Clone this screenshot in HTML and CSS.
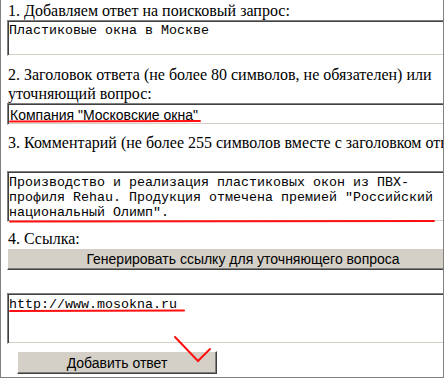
FILE: index.html
```html
<!DOCTYPE html>
<html lang="ru">
<head>
    <meta charset="UTF-8">
    <title>Добавить ответ</title>
    <link rel="stylesheet" href="styles.css">
</head>
<body>
    <div class="frame">
        <form class="answer_form">
            <div class="label label_first">1. Добавляем ответ на поисковый запрос:</div>
            <textarea class="field field_query">Пластиковые окна в Москве</textarea>

            <div class="label">2. Заголовок ответа (не более 80 символов, не обязателен) или<br>уточняющий вопрос:</div>
            <input class="field field_title" type="text" value="Компания &quot;Московские окна&quot;">

            <div class="label label_spaced">3. Комментарий (не более 255 символов вместе с заголовком ответа):</div>
            <textarea class="field field_comment">Производство и реализация пластиковых окон из ПВХ-профиля Rehau. Продукция отмечена премией "Российский национальный Олимп".</textarea>

            <div class="label">4. Ссылка:</div>
            <button type="button" class="win_button gen_button">Генерировать ссылку для уточняющего вопроса</button>
            <textarea class="field field_link">http://www.mosokna.ru</textarea>

            <button type="button" class="win_button submit_button">Добавить ответ</button>
        </form>

        <!-- red pen marks drawn over the form -->
        <svg class="marks" width="444" height="378" viewBox="0 0 444 378">
            <path d="M10 121.5 L200 121" />
            <path d="M10 221.5 L434 221" />
            <path d="M10 311 L184 310.5" />
            <path d="M175 337 L198 361 L210 349" />
        </svg>
    </div>
</body>
</html>
```

FILE: styles.css
```css
body {
    margin: 0;
    background: #ffffff;
}

.frame {
    position: relative;
    width: 444px;
    height: 378px;
    box-sizing: border-box;
    border: 1px solid #808080;
    border-top: 0;
    overflow: hidden;
    background: #ffffff;
}

.answer_form {
    padding: 1px 0 0 6px;
}

.label {
    font-family: "Liberation Serif", "Times New Roman", serif;
    font-size: 16px;
    line-height: 19px;
    color: #000000;
    white-space: nowrap;
    padding-left: 1px;
}

.label_spaced {
    margin-bottom: 19px;
}

.field {
    display: block;
    box-sizing: border-box;
    width: 450px;
    margin: 0;
    padding: 2px 1px;
    border: 1px solid;
    border-color: #808080 #ffffff #ffffff #808080;
    box-shadow: inset 1px 1px 0 #404040, inset -1px -1px 0 #d4d0c8;
    background: #ffffff;
    color: #000000;
    resize: none;
    overflow: hidden;
    outline: none;
}

textarea.field {
    font-family: "Liberation Mono", "Courier New", monospace;
    font-size: 13.33px;
    line-height: 15px;
}

.field_query {
    height: 36px;
    margin-bottom: 9px;
}

.field_title {
    height: 22px;
    padding: 1px 2px 0;
    font-family: "Liberation Sans", Arial, sans-serif;
    font-size: 14px;
    margin-bottom: 8px;
}

.field_comment {
    height: 51px;
    padding-top: 3px;
    margin-bottom: 7px;
}

.field_link {
    height: 51px;
    padding-top: 3px;
    margin-bottom: 7px;
}

.win_button {
    display: block;
    box-sizing: border-box;
    margin: 0;
    padding: 0;
    background-color: #d4d0c8;
    border: 1px solid;
    border-color: #ffffff #404040 #404040 #ffffff;
    box-shadow: inset -1px -1px 0 #808080;
    font-family: "Liberation Sans", Arial, sans-serif;
    font-size: 14px;
    color: #000000;
    text-align: center;
}

.gen_button {
    width: 472px;
    height: 22px;
    margin-bottom: 23px;
}

.submit_button {
    width: 200px;
    height: 23px;
    margin-left: 10px;
}

.marks {
    position: absolute;
    left: -1px;
    top: 0;
    pointer-events: none;
}

.marks path {
    fill: none;
    stroke: #ff1010;
    stroke-width: 2;
    stroke-linecap: round;
    stroke-linejoin: miter;
}
```
